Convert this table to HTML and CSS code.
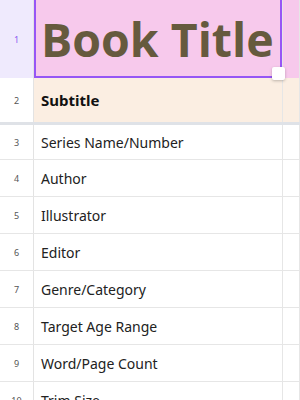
FILE: index.html
```html
<!DOCTYPE html>
<html>
<head>
<meta charset="utf-8">
<link rel="stylesheet" href="styles.css">
</head>
<body>
<div class="sheet">
  <div class="row r1">
    <div class="hdr sel">1</div>
    <div class="cell title">Book Title
      <div class="selection"></div>
      <div class="handle"></div>
    </div>
    <div class="cell"></div>
  </div>
  <div class="row r2">
    <div class="hdr">2</div>
    <div class="cell sub">Subtitle</div>
    <div class="cell"></div>
  </div>
  <div class="row r3"><div class="hdr">3</div><div class="cell">Series Name/Number</div><div class="cell"></div></div>
  <div class="row"><div class="hdr">4</div><div class="cell">Author</div><div class="cell"></div></div>
  <div class="row"><div class="hdr">5</div><div class="cell">Illustrator</div><div class="cell"></div></div>
  <div class="row"><div class="hdr">6</div><div class="cell">Editor</div><div class="cell"></div></div>
  <div class="row"><div class="hdr">7</div><div class="cell">Genre/Category</div><div class="cell"></div></div>
  <div class="row"><div class="hdr">8</div><div class="cell">Target Age Range</div><div class="cell"></div></div>
  <div class="row"><div class="hdr">9</div><div class="cell">Word/Page Count</div><div class="cell"></div></div>
  <div class="row"><div class="hdr">10</div><div class="cell">Trim Size</div><div class="cell"></div></div>
</div>
</body>
</html>
```
FILE: styles.css
```css
html, body { margin: 0; padding: 0; }
body {
  width: 300px; height: 400px; overflow: hidden; background: #fff;
  font-family: "Open Sans", "Liberation Sans", sans-serif;
  color: #1f1f1f;
}
.sheet { display: flex; flex-direction: column; }
.row {
  display: grid;
  grid-template-columns: 34px 249px 1fr;
  height: 37px;
  flex: 0 0 auto;
  border-bottom: 1px solid #e6e6e6;
  box-sizing: border-box;
}
.hdr {
  display: flex; align-items: center; justify-content: center;
  font-size: 9px; color: #555; border-right: 1px solid #e3e3e3;
  font-family: "Noto Sans", sans-serif;
}
.cell {
  display: flex; align-items: center;
  padding-left: 7px;
  font-size: 14px; color: #222;
  border-right: 1px solid #e6e6e6;
  font-family: "Noto Sans", sans-serif;
  white-space: nowrap;
  min-width: 0;
}
.r1 { height: 78px; border-bottom: none; }
.r1 .hdr { background: #efeafd; color: #8c5cf0; }
.r1 .cell { background: #f7c9ec; }
.title {
  position: relative;
  font-family: "Open Sans", sans-serif;
  font-weight: 700; font-size: 46.5px; color: #665a3e;
  padding-left: 7px;
}
.selection {
  position: absolute; left: 0; top: -2px; right: 0; bottom: 0;
  border: 2px solid #9656f5; pointer-events: none;
}
.handle {
  position: absolute; right: -3px; bottom: -2px; width: 13px; height: 13px;
  background: #fff; border-radius: 2px;
  box-shadow: 0 1px 3px rgba(0,0,0,0.25);
}
.r2 { height: 47px; border-bottom: 3px solid #dfe2e7; }
.r2 .cell { background: #fbeee2; }
.r3 { height: 35px; }
.sub { font-weight: 700; font-size: 15px; color: #111; }
```
